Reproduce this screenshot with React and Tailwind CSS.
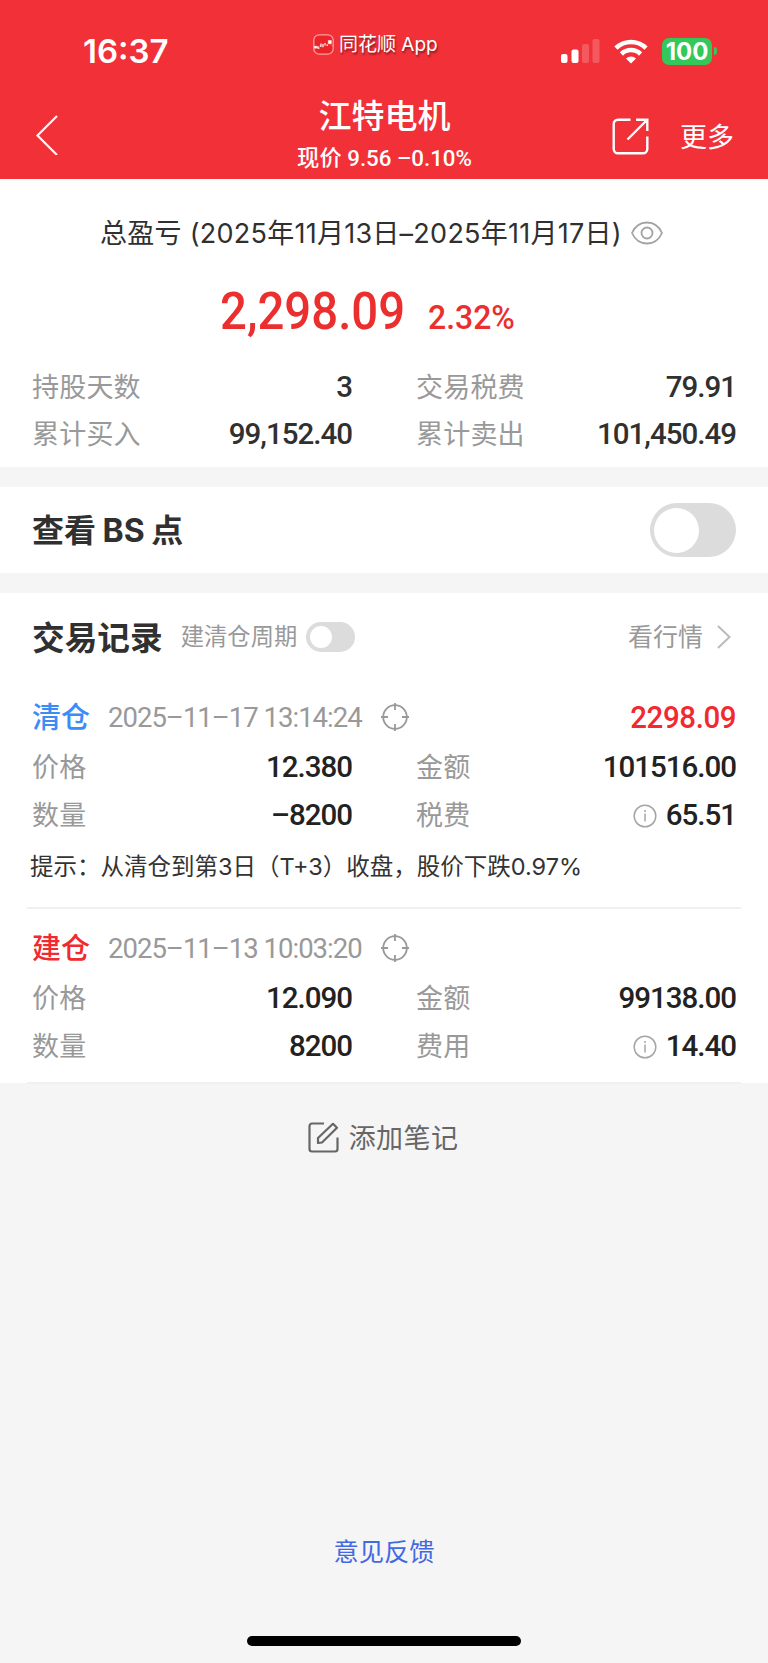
import { useState } from "react";

const trades = [
    {
        id: 1,
        type: "清仓",
        typeColor: "text-[#3b8cf7]",
        time: "2025–11–17 13:14:24",
        profit: "2298.09",
        price: "12.380",
        amount: "101516.00",
        quantity: "–8200",
        feeLabel: "税费",
        fee: "65.51",
        hint: "提示：从清仓到第3日（T+3）收盘，股价下跌0.97%",
    },
    {
        id: 2,
        type: "建仓",
        typeColor: "text-[#f02a2f]",
        time: "2025–11–13 10:03:20",
        price: "12.090",
        amount: "99138.00",
        quantity: "8200",
        feeLabel: "费用",
        fee: "14.40",
    },
];

const SignalIcon = () => (
    <svg width="39" height="24" viewBox="0 0 39 24" fill="#fff">
        <rect x="0" y="15" width="6.5" height="9" rx="2" />
        <rect x="10.5" y="10.5" width="7" height="13.5" rx="2" />
        <rect x="21" y="5" width="7" height="19" rx="2" opacity="0.2" />
        <rect x="31.5" y="0" width="7" height="24" rx="2" opacity="0.2" />
    </svg>
);

const WifiIcon = () => (
    <svg width="34" height="25" viewBox="0 0 34 25" fill="none" stroke="#fff" strokeWidth="4.6">
        <path d="M2 9.1a21.4 21.4 0 0 1 30 0" />
        <path d="M7.4 15a13.7 13.7 0 0 1 19.2 0" />
        <path d="M17 24.6l-5-5a7.2 7.2 0 0 1 10 0z" fill="#fff" stroke="none" />
    </svg>
);

const LogoIcon = () => (
    <svg width="21" height="21" viewBox="0 0 21 21" fill="none">
        <rect x="0.8" y="0.8" width="19.4" height="19.4" rx="5.5" fill="#ea2429" stroke="#f9a0a2" strokeWidth="1.3" />
        <path d="M1.5 13h3M5 12.2v2h1.5M8 9.5v2.7H6.8M10 10v3.2M12 9v2.5M13.5 11.2h1.5" stroke="#fff" strokeWidth="1.2" />
        <path d="M15.3 6.5h3v3.3h-3zM1.6 12.2h2v2h-2zM18.6 11.5h1" fill="#fff" stroke="#fff" strokeWidth="0.5" />
    </svg>
);

const ShareIcon = () => (
    <svg width="37" height="37" viewBox="0 0 37 37" fill="none" stroke="#fff" strokeWidth="2.4">
        <path d="M18.5 1.7H6a4.3 4.3 0 0 0-4.3 4.3v25A4.3 4.3 0 0 0 6 35.3h25a4.3 4.3 0 0 0 4.3-4.3V18.5" />
        <path d="M24 1.7h11.3V13M35 2L15.5 21.5" />
    </svg>
);

const EyeIcon = () => (
    <svg width="32" height="24" viewBox="0 0 32 24" fill="none" stroke="#a3a3a3" strokeWidth="1.8">
        <path d="M1 12C4 5.200 9.500 1.500 16 1.500S28 5.200 31 12C28 18.800 22.500 22.500 16 22.500S4 18.800 1 12z" />
        <circle cx="16" cy="12" r="5.500" />
    </svg>
);

const TargetIcon = () => (
    <svg width="28" height="28" viewBox="0 0 28 28" fill="none" stroke="#999" strokeWidth="1.8">
        <circle cx="14" cy="14" r="11.8" />
        <path d="M14 0v7M14 21v7M0 14h7M21 14h7" />
    </svg>
);

const InfoIcon = () => (
    <svg width="24" height="24" viewBox="0 0 24 24" fill="none" stroke="#a6a6a6" strokeWidth="1.5">
        <circle cx="12" cy="12" r="10.8" />
        <path d="M12 9.500v8M12 6v2" />
    </svg>
);

const EditIcon = () => (
    <svg width="31" height="31" viewBox="0 0 31 31" fill="none" stroke="#666" strokeWidth="2.2">
        <path d="M16 1.500H4A2.500 2.500 0 0 0 1.500 4v23A2.500 2.500 0 0 0 4 29.500h23a2.500 2.500 0 0 0 2.500-2.500V15.500" />
        <path d="M10 21v-5L25 1.800l4 4L14 20.500z" strokeLinejoin="round" />
    </svg>
);

function Stat({ label, value, color = "text-[#303030]", info }) {
    return (
        <div className="flex items-center justify-between">
            <span className="text-[27px] tracking-[0.2px] text-[#999]">{label}</span>
            <span className={`flex items-center gap-[9px] font-[Roboto] text-[29.5px] font-medium tracking-[-1px] ${color}`}>
                {info && <InfoIcon />}
                {value}
            </span>
        </div>
    );
}

function Trade({ trade }) {
    const dark = "text-[#222]";
    return (
        <div className="mx-[27px] border-b-2 border-[#f0f0f0] pr-[5px] pl-[5px] last:pt-[13px] last:pb-[11px]">
            <div className="flex h-[52px] items-center">
                <span className={`text-[29px] font-medium ${trade.typeColor}`}>{trade.type}</span>
                <span className="ml-[18px] w-[273px] pt-0.5 font-[Roboto] text-[27.5px] tracking-[-1px] text-[#999]">{trade.time}</span>
                <TargetIcon />
                {trade.profit && (
                    <span className="ml-auto inline-block origin-right scale-x-[0.92] font-[Roboto] text-[32px] font-medium tracking-[-0.4px] text-[#f02a2f]">{trade.profit}</span>
                )}
            </div>
            <div className="grid auto-rows-[48.5px] grid-cols-[320px_320px] gap-x-[64px]">
                <Stat label="价格" value={trade.price} color={dark} />
                <Stat label="金额" value={trade.amount} color={dark} />
                <Stat label="数量" value={trade.quantity} color={dark} />
                <Stat label={trade.feeLabel} value={trade.fee} color={dark} info />
            </div>
            {trade.hint && <div className="-ml-0.5 h-[67px] pt-1.5 text-[23.5px] leading-[42px] whitespace-nowrap text-[#333]">{trade.hint}</div>}
        </div>
    );
}

export default function App() {
    const [showBS, setShowBS] = useState(false);
    const [showCycle, setShowCycle] = useState(false);

    return (
        <div className="flex h-[1663px] w-[768px] flex-col bg-[#f5f5f5] font-[Inter,'Noto_Sans_CJK_SC',sans-serif] leading-none">
            <header className="h-[179px] bg-[#f23038] text-white">
                <div className="flex h-[94px] items-center pr-[51px] pl-[83px]">
                    <span className="w-[230px] pt-2 text-[33px] font-semibold">16:37</span>
                    <div className="mb-1.5 flex items-center gap-[5px] text-[19px] [text-shadow:1px_2px_2px_rgba(0,0,0,0.45)]">
                        <LogoIcon />
                        <span>同花顺 App</span>
                    </div>
                    <div className="ml-auto flex w-[156px] items-center pt-2">
                        <SignalIcon />
                        <span className="ml-[14px]"><WifiIcon /></span>
                        <span className="ml-[14px] flex h-[27px] w-[50px] items-center justify-center rounded-[7px] bg-[#34c759] pt-px text-[24px] font-bold">100</span>
                        <span className="ml-0.5 h-2 w-[3px] rounded-r-full bg-[#34c759]" />
                    </div>
                </div>
                <div className="grid h-[85px] grid-cols-[1fr_auto_1fr] items-center pr-[34px] pl-[35px]">
                    <svg className="mb-1" width="24" height="40" viewBox="0 0 24 40" fill="none" stroke="#fff" strokeWidth="2.2">
                        <path d="M22 1L2.500 20.500L22 40" />
                    </svg>
                    <div className="flex flex-col items-center gap-[14px] pb-[3px]">
                        <h1 className="text-[33px] font-medium">江特电机</h1>
                        <p className="font-[Roboto,'Noto_Sans_CJK_SC'] text-[22.3px] font-medium">现价 9.56 –0.10%</p>
                    </div>
                    <div className="flex items-center justify-end gap-[31px]">
                        <ShareIcon />
                        <span className="pt-0.5 text-[27px]">更多</span>
                    </div>
                </div>
            </header>

            <section className="h-[288px] bg-white">
                <div className="flex h-[107px] items-center gap-[9px] pl-[100px]">
                    <span className="pt-px text-[27px] tracking-[0.26px] whitespace-nowrap text-[#303030]">总盈亏 (2025年11月13日–2025年11月17日)</span>
                    <EyeIcon />
                </div>
                <div className="flex h-[78px] items-baseline gap-[24px] pl-[220px] font-[Roboto] font-medium text-[#eb2f2f]">
                    <span className="-mr-[19px] inline-block origin-left scale-x-[0.91] text-[52px]">2,298.09</span>
                    <span className="inline-block origin-left scale-x-[0.94] text-[34px]">2.32%</span>
                </div>
                <div className="grid auto-rows-[47px] grid-cols-[320px_320px] gap-x-[64px] pl-[32px]">
                    <Stat label="持股天数" value="3" />
                    <Stat label="交易税费" value="79.91" />
                    <Stat label="累计买入" value="99,152.40" />
                    <Stat label="累计卖出" value="101,450.49" />
                </div>
            </section>

            <section className="mt-5 flex h-[86px] items-center justify-between bg-white px-8">
                <span className="pt-0.5 text-[32px] font-bold text-[#303030] [word-spacing:-1px]">查看 BS 点</span>
                <button onClick={() => setShowBS(!showBS)} className={`flex h-[54px] w-[86px] items-center rounded-full px-1 ${showBS ? "justify-end bg-[#f23038]" : "bg-[#dcdcdc]"}`}>
                    <span className="size-[45px] rounded-full bg-white" />
                </button>
            </section>

            <section className="mt-5 h-[490px] bg-white">
                <div className="flex h-[98px] items-center pr-[37px] pb-[10px] pl-[32px]">
                    <h2 className="pt-0.5 text-[32.7px] font-bold text-[#303030]">交易记录</h2>
                    <span className="ml-[18px] text-[23.3px] text-[#999]">建清仓周期</span>
                    <button onClick={() => setShowCycle(!showCycle)} className={`ml-[9px] flex h-[30px] w-[49px] items-center rounded-full px-1 ${showCycle ? "justify-end bg-[#f23038]" : "bg-[#dcdcdc]"}`}>
                        <span className="size-[22px] rounded-full bg-white" />
                    </button>
                    <span className="ml-auto text-[25px] text-[#999]">看行情</span>
                    <svg className="ml-[14px]" width="14" height="24" viewBox="0 0 14 24" fill="none" stroke="#bbb" strokeWidth="2">
                        <path d="M1 1l11.500 11L1 23" />
                    </svg>
                </div>
                {trades.map((t) => (
                    <Trade key={t.id} trade={t} />
                ))}
            </section>

            <div className="mt-9 mr-0.5 flex h-9 items-center justify-center gap-[10px] text-[27px] tracking-[0.4px] text-[#666]">
                <EditIcon />
                <span className="pt-0.5">添加笔记</span>
            </div>

            <div className="mt-auto flex flex-col items-center pb-[17px]">
                <span className="text-[25.3px] text-[#4169e1]">意见反馈</span>
                <div className="mt-[72px] h-[10px] w-[274px] rounded-full bg-black" />
            </div>
        </div>
    );
}
